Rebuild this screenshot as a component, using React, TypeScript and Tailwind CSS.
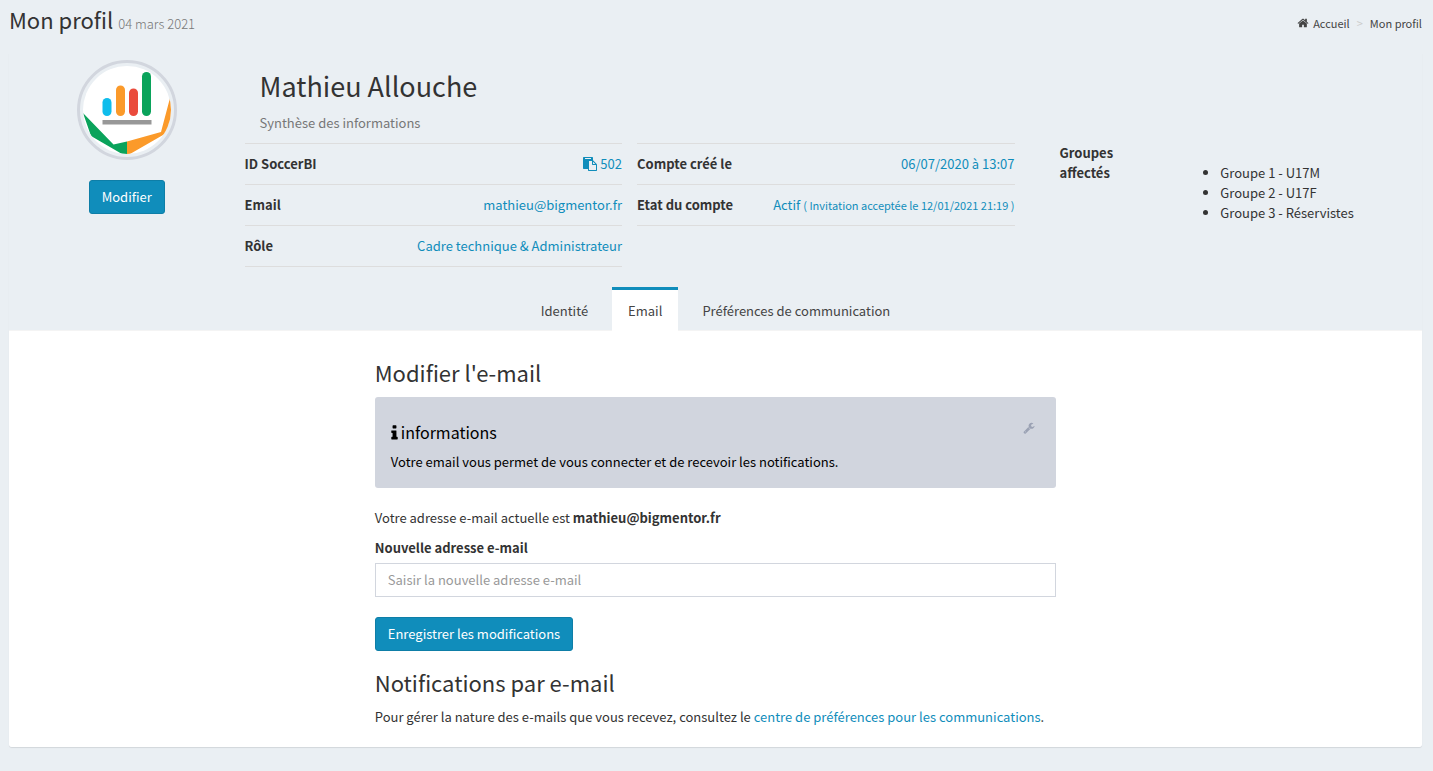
import { useState } from "react";
import type { ReactNode } from "react";

const ICONS = {
  home: "M1472 992v480q0 26-19 45t-45 19h-384v-384h-256v384h-384q-26 0-45-19t-19-45v-480q0-1 .5-3t.5-3l575-474 575 474q1 2 1 6zm223-69l-62 74q-8 9-21 11h-3q-13 0-21-7l-692-577-692 577q-12 8-24 7-13-2-21-11l-62-74q-8-10-7-23.5t11-21.5l719-599q32-26 76-26t76 26l244 204v-195q0-14 9-23t23-9h192q14 0 23 9t9 23v408l219 182q10 8 11 21.5t-7 23.5z",
  paste:
    "M768 1664h896v-640h-416q-40 0-68-28t-28-68v-416h-384v1152zm256-1440v-64q0-13-9.5-22.5t-22.5-9.5h-704q-13 0-22.5 9.5t-9.5 22.5v64q0 13 9.5 22.5t22.5 9.5h704q13 0 22.5-9.5t9.5-22.5zm256 672h299l-299-299v299zm512 128v672q0 40-28 68t-68 28h-960q-40 0-68-28t-28-68v-160h-544q-40 0-68-28t-28-68v-1344q0-40 28-68t68-28h1088q40 0 68 28t28 68v328q21 13 36 28l408 408q28 28 48 76t20 88z",
  info: "M1216 1344v128q0 26-19 45t-45 19h-512q-26 0-45-19t-19-45v-128q0-26 19-45t45-19h64v-384h-64q-26 0-45-19t-19-45v-128q0-26 19-45t45-19h384q26 0 45 19t19 45v576h64q26 0 45 19t19 45zm-128-1152v192q0 26-19 45t-45 19h-256q-26 0-45-19t-19-45v-192q0-26 19-45t45-19h256q26 0 45 19t19 45z",
  wrench:
    "M448 1472q0-26-19-45t-45-19-45 19-19 45 19 45 45 19 45-19 19-45zm644-420l-682 682q-37 37-90 37-52 0-91-37l-106-108q-38-36-38-90 0-53 38-91l681-681q39 98 114.5 173.5t173.5 114.5zm634-435q0 39-23 106-47 134-164.5 217.5t-258.5 83.5q-185 0-316.5-131.5t-131.5-316.5 131.5-316.5 316.5-131.5q58 0 121.5 16.500t107.5 46.5q16 11 16 28t-16 28l-293 169v224l193 107q5-3 79-48.5t135.5-81 70.5-35.5q15 0 23.5 10t8.5 25z",
};

interface IconProps {
  name: keyof typeof ICONS;
  className: string;
  viewBox?: string;
}

function Icon({ name, className, viewBox = "0 0 1792 1792" }: IconProps) {
  return (
    <svg viewBox={viewBox} fill="currentColor" aria-hidden="true" className={className}>
      <path d={ICONS[name]} />
    </svg>
  );
}

/** Bars over the two-tone hexagon, cropped to a circle. */
function Avatar() {
  return (
    <div className="size-[100px] rounded-full border-3 border-[#d2d6de] p-[3px]">
      <svg viewBox="0 0 88 88" role="img" aria-label="SoccerBI" className="size-full rounded-full">
        <rect width="88" height="88" fill="#fff" />
        <path d="M0 47 30.500 78.500 44 75.500V88H39L8 70Z" fill="#0aa35b" />
        <path d="M44 75.500 78 66 87 32 88 31V64L80 69 47 88H44Z" fill="#fb9a2a" />
        <rect x="19.500" y="32" width="9" height="18" rx="4.500" fill="#0fbdec" />
        <rect x="33" y="19.500" width="9" height="30.500" rx="4.500" fill="#fb9a2a" />
        <rect x="46" y="22.500" width="9" height="27.500" rx="4.500" fill="#ea4b3c" />
        <rect x="59" y="6" width="9" height="44" rx="4.500" fill="#0aa35b" />
        <rect x="19.500" y="54" width="49" height="4.500" fill="#989898" />
      </svg>
    </div>
  );
}

function InfoRow({ label, children }: { label: string; children: ReactNode }) {
  return (
    <div className="flex justify-between border-b border-[#ddd] py-[10px]">
      <dt className="font-bold">{label}</dt>
      <dd className="text-[#108dbb]">{children}</dd>
    </div>
  );
}

const TABS = ["Identité", "Email", "Préférences de communication"];
const GROUPS = ["Groupe 1 - U17M", "Groupe 2 - U17F", "Groupe 3 - Réservistes"];

const BUTTON =
  "h-[34px] rounded-[3px] border border-[#0e7ea7] bg-[#108dbb] px-3 text-white hover:bg-[#0e7ea7]";

export default function App() {
  const [tab, setTab] = useState("Email");
  const [email, setEmail] = useState("");

  return (
    <div className="min-h-screen bg-[#eaeff3] pr-[11px] pb-6 pl-[9px] font-['Noto_Sans_CJK_SC',sans-serif] text-[13px] leading-5 text-[#333]">
      <header className="flex h-[53px] items-start justify-between">
        <h1 className="pt-[7px] text-[22px] leading-6">
          Mon profil <small className="text-[13px] font-light text-[#777]">04 mars 2021</small>
        </h1>
        <nav aria-label="Fil d'Ariane" className="flex pt-[13px] text-[11px] text-[#444]">
          <a href="#accueil" className="flex items-center gap-1">
            <Icon name="home" className="size-3" />
            Accueil
          </a>
          <span className="px-[7px] text-[#ccc]">&gt;</span>
          <span>Mon profil</span>
        </nav>
      </header>

      <main className="rounded-b-[3px] shadow-[0_1px_1px_rgba(0,0,0,0.1)]">
        <section className="flex pt-[7px]">
          <div className="flex w-1/6 flex-col items-center gap-5">
            <Avatar />
            <button type="button" className={BUTTON}>
              Modifier
            </button>
          </div>
          <div className="flex-1">
            <h2 className="pt-[10px] pl-[15px] text-[27px] leading-8">Mathieu Allouche</h2>
            <p className="pt-[11px] pb-[10px] pl-[15px] text-[#777]">Synthèse des informations</p>
            <div className="grid grid-cols-3">
              <dl className="mr-[15px] border-t border-[#ddd]">
                <InfoRow label="ID SoccerBI">
                  <a href="#copier" className="flex items-center gap-[3px]">
                    <Icon name="paste" className="size-[14px]" />
                    502
                  </a>
                </InfoRow>
                <InfoRow label="Email">mathieu@bigmentor.fr</InfoRow>
                <InfoRow label="Rôle">Cadre technique &amp; Administrateur</InfoRow>
              </dl>
              <dl className="mr-[15px] border-t border-[#ddd]">
                <InfoRow label="Compte créé le">06/07/2020 à 13:07</InfoRow>
                <InfoRow label="Etat du compte">
                  Actif <small className="text-[11px]">( Invitation acceptée le 12/01/2021 21:19 )</small>
                </InfoRow>
              </dl>
              <div className="flex pl-[30px]">
                <strong className="w-1/3">
                  Groupes
                  <br />
                  affectés
                </strong>
                <ul className="list-disc pt-5 pl-10">
                  {GROUPS.map((group) => (
                    <li key={group}>{group}</li>
                  ))}
                </ul>
              </div>
            </div>
          </div>
        </section>

        <div role="tablist" className="flex justify-center gap-2 border-b border-[#f4f4f4] pt-5">
          {TABS.map((name) => (
            <button
              key={name}
              type="button"
              role="tab"
              aria-selected={tab === name}
              onClick={() => setTab(name)}
              className={`-mb-px h-11 border-t-3 px-4 text-[#444] ${
                tab === name ? "border-[#108dbb] bg-white" : "border-transparent"
              }`}
            >
              {name}
            </button>
          ))}
        </div>

        <section className="rounded-b-[3px] bg-white pt-[29px] pb-5">
          <div className="mx-auto w-[calc(50%-25px)]">
            <h3 className="text-[22px] leading-6">Modifier l'e-mail</h3>
            <div className="mt-[13px] flex items-start justify-between rounded-[3px] bg-[#d1d5de] px-4 pt-[25px] pb-4 text-black">
              <div>
                <h4 className="flex items-center gap-[3px] text-[16px] leading-[21px]">
                  <Icon name="info" viewBox="576 0 640 1792" className="h-[18px] w-[7px]" />
                  informations
                </h4>
                <p className="mt-[9px]">Votre email vous permet de vous connecter et de recevoir les notifications.</p>
              </div>
              <Icon name="wrench" className="mr-[5px] size-3 text-[#9ba2b4]" />
            </div>

            <form onSubmit={(e) => e.preventDefault()}>
              <p className="mt-5">
                Votre adresse e-mail actuelle est <strong>mathieu@bigmentor.fr</strong>
              </p>
              <label htmlFor="new-email" className="mt-[10px] block font-bold">
                Nouvelle adresse e-mail
              </label>
              <input
                id="new-email"
                type="email"
                value={email}
                onChange={(e) => setEmail(e.target.value)}
                placeholder="Saisir la nouvelle adresse e-mail"
                className="mt-[5px] h-[34px] w-full border border-[#d2d6de] bg-white px-3 pb-0.5 placeholder:text-[#999]"
              />
              <button type="submit" className={`mt-5 ${BUTTON}`}>
                Enregistrer les modifications
              </button>
            </form>

            <h3 className="mt-[19px] text-[22px] leading-6">Notifications par e-mail</h3>
            <p className="mt-[13px]">
              Pour gérer la nature des e-mails que vous recevez, consultez le{" "}
              <a href="#preferences" className="text-[#108dbb]">
                centre de préférences pour les communications
              </a>
              .
            </p>
          </div>
        </section>
      </main>
    </div>
  );
}
